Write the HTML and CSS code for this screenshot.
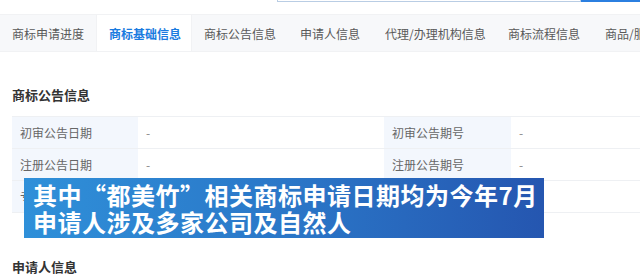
FILE: index.html
```html
<!DOCTYPE html>
<html lang="zh">
<head>
<meta charset="utf-8">
<link rel="stylesheet" href="styles.css">
</head>
<body>
<div class="page">
  <div class="search">
    <div class="search-input"></div>
    <div class="search-btn"></div>
  </div>
  <nav class="tabs">
    <span class="tab">商标申请进度</span>
    <span class="tab active">商标基础信息</span>
    <span class="tab">商标公告信息</span>
    <span class="tab">申请人信息</span>
    <span class="tab">代理/办理机构信息</span>
    <span class="tab">商标流程信息</span>
    <span class="tab">商品/服务</span>
  </nav>
  <h2 class="section-title">商标公告信息</h2>
  <div class="table">
    <div class="row">
      <div class="label">初审公告日期</div><div class="value">-</div>
      <div class="label">初审公告期号</div><div class="value">-</div>
    </div>
    <div class="row">
      <div class="label">注册公告日期</div><div class="value">-</div>
      <div class="label">注册公告期号</div><div class="value">-</div>
    </div>
    <div class="row">
      <div class="label">专用权期限</div><div class="value">-</div>
      <div class="label">&nbsp;</div><div class="value"></div>
    </div>
  </div>
  <h2 class="section-title second">申请人信息</h2>
  <div class="caption">
    <div>其中“都美竹”相关商标申请日期均为今年7月</div>
    <div>申请人涉及多家公司及自然人</div>
  </div>
</div>
</body>
</html>
```

FILE: styles.css
```css
* { box-sizing: border-box; margin: 0; padding: 0; }
html, body { background: #fff; }
body {
  font-family: "Noto Sans CJK SC", "Liberation Sans", sans-serif;
  color: #555;
  overflow: hidden;
  width: 640px;
  height: 274px;
}
.page { position: relative; width: 640px; height: 274px; overflow: hidden; }
.search { display: flex; height: 2px; padding-left: 277px; }
.search-input { width: 304px; border: 1px solid #b9cde4; border-top: 0; }
.search-btn { flex: 1; background: #2b7fe0; }
.tabs {
  margin-top: 12px;
  height: 38px;
  background: #f7f8fa;
  border-top: 1px solid #f1f2f4;
  border-bottom: 1px solid #f1f2f4;
  display: flex;
  align-items: stretch;
  white-space: nowrap;
}
.tab {
  display: flex;
  align-items: center;
  padding: 0 12px;
  font-size: 12px;
  color: #595959;
  flex: none;
}
.tab:nth-child(1) { width: 96px; }
.tab:nth-child(2) { width: 96px; }
.tab:nth-child(3) { width: 96px; }
.tab:nth-child(4) { width: 85px; }
.tab:nth-child(5) { width: 123px; }
.tab:nth-child(6) { width: 97px; }
.tab.active {
  background: #fff;
  color: #1a7be0;
  font-weight: 700;
  border-left: 1px solid #f1f2f4;
  border-right: 1px solid #f1f2f4;
}
.section-title {
  margin: 34px 0 0 12px;
  font-size: 13px;
  font-weight: 700;
  color: #333;
  line-height: 18px;
}
.section-title.second { margin-top: 45px; }
.table {
  margin: 12px 0 0 12px;
  border-top: 1px solid #eef0f3;
}
.row {
  display: grid;
  grid-template-columns: 126px 246px 127px 1fr;
  height: 32px;
  border-bottom: 1px solid #eef0f3;
  font-size: 12px;
}
.label {
  background: #f3f7fd;
  color: #666;
  padding-left: 8px;
  display: flex;
  align-items: center;
}
.value {
  color: #888;
  padding-left: 8px;
  display: flex;
  align-items: center;
}
.caption {
  position: absolute;
  left: 24px;
  top: 178px;
  width: 520px;
  height: 60px;
  padding: 3px 0 0 9px;
  background: linear-gradient(90deg, #2f90d9 0%, #2a74c6 55%, #2556b0 100%);
  color: #fff;
  font-family: "Noto Sans CJK SC", sans-serif;
  font-weight: 700;
  font-size: 24px;
  line-height: 27px;
  letter-spacing: 0.5px;
  white-space: nowrap;
}
```
